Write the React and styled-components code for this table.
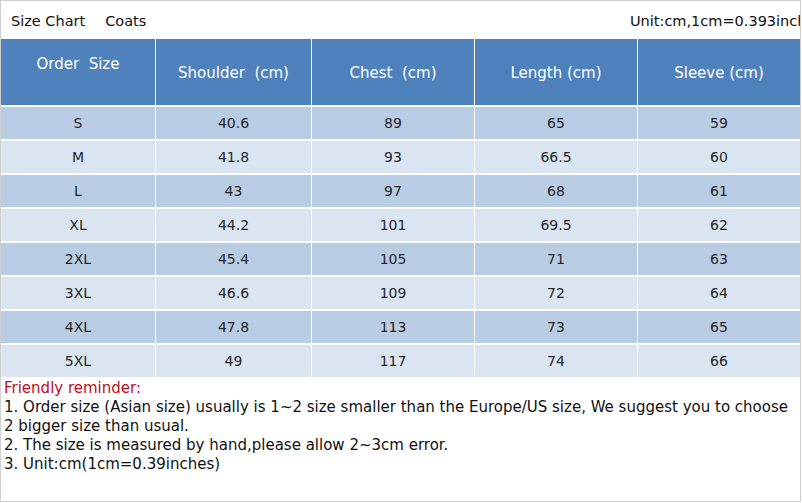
import React from "react";
import styled, { createGlobalStyle } from "styled-components";

const Global = createGlobalStyle`
  html, body {
    margin: 0;
    padding: 0;
    background: #fff;
  }
  body {
    font-family: "DejaVu Sans", Tahoma, Verdana, sans-serif;
  }
`;

const Frame = styled.div`
  box-sizing: border-box;
  width: 801px;
  height: 502px;
  border: 1px solid #cfcfcf;
  display: flex;
  flex-direction: column;
  overflow: hidden;
`;

const TitleBar = styled.div`
  height: 38px;
  display: flex;
  align-items: center;
  font-size: 14.5px;
  color: #111;
  white-space: nowrap;
  padding-top: 1px;
  box-sizing: border-box;
`;

const TitleLeft = styled.div`
  padding-left: 10px;
  display: flex;
  gap: 20px;
`;

const Unit = styled.div`
  margin-left: auto;
  width: 170px;
  overflow: hidden;
`;

const Table = styled.div`
  display: grid;
  grid-template-columns: 154px 155px 162px 162px 162px;
  column-gap: 1px;
  row-gap: 2px;
  grid-auto-rows: 32px;
  grid-template-rows: 66px;
  background: #fff;
`;

const Head = styled.div`
  background: #4f81bd;
  color: #fff;
  font-size: 15px;
  white-space: pre;
  display: flex;
  align-items: center;
  justify-content: center;
  padding-top: 2px;
  padding-bottom: ${(p) => (p.$raised ? "18px" : "0")};
  box-sizing: border-box;
`;

const Cell = styled.div`
  background: ${(p) => (p.$odd ? "#b8cce4" : "#dbe5f1")};
  color: #262626;
  font-size: 14px;
  display: flex;
  align-items: center;
  justify-content: center;
`;

const Notes = styled.div`
  padding: 2px 0 0 3px;
  font-size: 15px;
  line-height: 19px;
  color: #111;
  white-space: nowrap;
`;

const Reminder = styled.div`
  color: #c00d1e;
`;

const heads = ["Order  Size", "Shoulder  (cm)", "Chest  (cm)", "Length (cm)", "Sleeve (cm)"];

const rows = [
  ["S", "40.6", "89", "65", "59"],
  ["M", "41.8", "93", "66.5", "60"],
  ["L", "43", "97", "68", "61"],
  ["XL", "44.2", "101", "69.5", "62"],
  ["2XL", "45.4", "105", "71", "63"],
  ["3XL", "46.6", "109", "72", "64"],
  ["4XL", "47.8", "113", "73", "65"],
  ["5XL", "49", "117", "74", "66"],
];

export default function App() {
  return (
    <>
      <Global />
      <Frame>
        <TitleBar>
          <TitleLeft>
            <span>Size Chart</span>
            <span>Coats</span>
          </TitleLeft>
          <Unit>Unit:cm,1cm=0.393inches</Unit>
        </TitleBar>
        <Table>
          {heads.map((h, i) => (
            <Head key={h} $raised={i === 0}>
              {h}
            </Head>
          ))}
          {rows.map((r, ri) =>
            r.map((v, ci) => (
              <Cell key={ri + "-" + ci} $odd={ri % 2 === 0}>
                {v}
              </Cell>
            ))
          )}
        </Table>
        <Notes>
          <Reminder>Friendly reminder:</Reminder>
          <div>
            1. Order size (Asian size) usually is 1~2 size smaller than the Europe/US size, We suggest you to choose
          </div>
          <div>2 bigger size than usual.</div>
          <div>2. The size is measured by hand,please allow 2~3cm error.</div>
          <div>3. Unit:cm(1cm=0.39inches)</div>
        </Notes>
      </Frame>
    </>
  );
}
